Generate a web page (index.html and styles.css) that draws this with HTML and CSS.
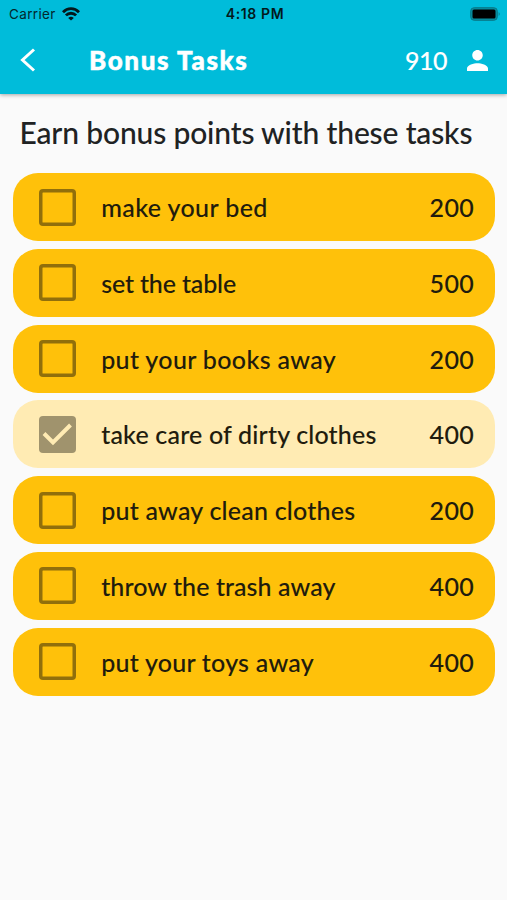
FILE: index.html
```
<!DOCTYPE html>
<html lang="en">
<head>
<meta charset="utf-8">
<title>Bonus Tasks</title>
<link rel="stylesheet" href="styles.css">
</head>
<body>
<header class="appbar">
  <div class="status">
    <div class="carrier"><span>Carrier</span>
      <svg class="wifi" viewBox="0 0 18 14" width="18" height="14" fill="none" stroke="#03191c" stroke-width="2.8"><path d="M1 5.200C5.500.5 12.500.5 17 5.200M3.900 8.400C6.700 5.500 11.300 5.500 14.100 8.400"/><path d="M9 13.500 6.200 10.900Q9 8.500 11.800 10.900Z" fill="#03191c" stroke="none"/></svg>
    </div>
    <span class="clock">4:18 PM</span>
    <svg class="battery" viewBox="0 0 31 14" width="31" height="14"><rect x=".7" y=".7" width="26.600" height="12.600" rx="3.500" fill="#078ea0" stroke="#087786" stroke-width="1"/><rect x="2.500" y="2.500" width="23" height="9" rx="1.500" fill="#000"/><path d="M28.700 5q2 2 0 4z" fill="#087786"/></svg>
  </div>
  <div class="toolbar">
    <svg class="back" viewBox="0 0 16 26" width="16" height="26" fill="none" stroke="#fff" stroke-width="3"><path d="M14 2.500 2.500 13 14 23.500"/></svg>
    <h1 class="title">Bonus Tasks</h1>
    <span class="points">910</span>
    <svg class="person" viewBox="4 4 16 16" width="21" height="21" fill="#fff"><path d="M12 12c2.210 0 4-1.790 4-4s-1.790-4-4-4-4 1.790-4 4 1.790 4 4 4zm0 2c-2.670 0-8 1.340-8 4v2h16v-2c0-2.660-5.330-4-8-4z"/></svg>
  </div>
</header>
<main>
  <h2 class="heading">Earn bonus points with these tasks</h2>
  <ul class="tasks">
    <li class="task"><span class="box"></span><span class="label bed">make your bed</span><span class="value">200</span></li>
    <li class="task"><span class="box"></span><span class="label table">set the table</span><span class="value">500</span></li>
    <li class="task"><span class="box"></span><span class="label books">put your books away</span><span class="value">200</span></li>
    <li class="task done"><span class="box"><svg viewBox="0 0 37 37" width="37" height="37" fill="none" stroke="#ffebb3" stroke-width="4"><path d="M5 17.500 14 26.500 31.500 9"/></svg></span><span class="label dirty">take care of dirty clothes</span><span class="value">400</span></li>
    <li class="task"><span class="box"></span><span class="label clean">put away clean clothes</span><span class="value">200</span></li>
    <li class="task"><span class="box"></span><span class="label trash">throw the trash away</span><span class="value">400</span></li>
    <li class="task"><span class="box"></span><span class="label toys">put your toys away</span><span class="value">400</span></li>
  </ul>
</main>
</body>
</html>
```
FILE: styles.css
```
* { box-sizing: border-box; }
body { margin: 0; height: 900px; overflow: hidden; background: #fafafa; color: #211b0d; font-family: Lato, "Liberation Sans", sans-serif; }
svg { display: block; flex: none; }
.appbar { height: 94px; background: #00bcda; box-shadow: 0 1px 4px rgba(0,0,0,.35); }
.status { height: 27px; display: grid; grid-template-columns: 1fr auto 1fr; align-items: center; padding: 0 6px 0 9px; font-family: Inter, "Liberation Sans", sans-serif; font-size: 13.500px; color: #03282d; }
.carrier { display: flex; align-items: center; gap: 6px; letter-spacing: .35px; }
.clock { font-weight: 600; font-size: 14px; letter-spacing: .6px; color: #03191c; }
.battery { justify-self: end; }
.toolbar { height: 66px; display: flex; align-items: center; padding: 0 19px 0 20px; color: #fff; }
.title { margin: 0 0 0 53px; flex: 1; font-size: 26px; font-weight: 900; letter-spacing: 1.600px; white-space: nowrap; -webkit-text-stroke: .5px; }
.points { font-size: 25px; font-weight: 500; letter-spacing: -.5px; margin-right: 20px; -webkit-text-stroke: .1px; }
.heading { margin: 0; height: 79px; line-height: 76px; padding-left: 19.500px; font-size: 30px; font-weight: 500; letter-spacing: -.15px; color: #202223; white-space: nowrap; -webkit-text-stroke: .05px; }
.tasks { list-style: none; margin: 0; padding: 0 12px 0 13px; display: flex; flex-direction: column; gap: 7.750px; }
.task { height: 68px; border-radius: 25px; background: #ffc10a; display: flex; align-items: center; padding: 0 21px 0 25.700px; font-size: 25px; font-weight: 500; -webkit-text-stroke: .08px; }
.box { width: 37px; height: 37px; box-shadow: inset 0 0 0 3.500px #916f0b; border-radius: 4px; flex: none; }
.label { margin-left: 25.500px; flex: 1; white-space: nowrap; }
.value { letter-spacing: .3px; }
.bed { letter-spacing: .4px; }
.table { letter-spacing: -.15px; }
.books { letter-spacing: .35px; }
.dirty { letter-spacing: .18px; }
.clean { letter-spacing: .22px; }
.trash { letter-spacing: .08px; }
.toys { letter-spacing: .24px; }
.done { background: #ffebb3; }
.done .box { box-shadow: none; background: #a0936d; }
```
